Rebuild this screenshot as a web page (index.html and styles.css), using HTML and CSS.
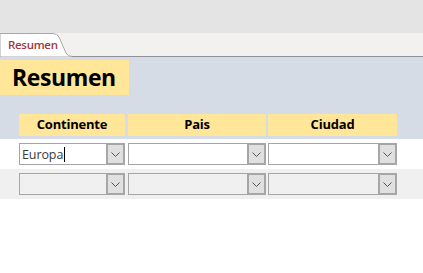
FILE: index.html
```html
<!DOCTYPE html>
<html lang="es">

<head>
    <meta charset="UTF-8">
    <meta name="viewport" content="width=device-width, initial-scale=1.0">
    <title>Resumen</title>

    <link rel="stylesheet" href="styles.css">
</head>

<body>

    <div class="ribbon"></div>

    <div class="tabs">
        <div class="tab">
            <svg class="tab-shape" width="73" height="24" viewBox="0 0 73 24">
                <path d="M0 0.5 H53 Q57 0.5 59 4 L66 20 Q68 23.5 72 23.5 V24 H0 Z" fill="#fff" stroke="#a8a8a8" />
            </svg>
            <span class="tab-label">Resumen</span>
        </div>
        <div class="tab-rest"></div>
    </div>

    <div class="form-header">
        <div class="title">Resumen</div>
        <div class="grid">
            <div class="head first">Continente</div>
            <div class="head">Pais</div>
            <div class="head">Ciudad</div>
        </div>
    </div>

    <div class="row">
        <div class="grid">
            <div class="combo first">
                <div class="combo-text">Europa<span class="caret"></span></div>
                <div class="combo-btn"><svg width="9" height="5" viewBox="0 0 9 5"><polyline points="0.5,0.5 4.5,4.5 8.5,0.5" fill="none" stroke="#555" /></svg></div>
            </div>
            <div class="combo">
                <div class="combo-text"></div>
                <div class="combo-btn"><svg width="9" height="5" viewBox="0 0 9 5"><polyline points="0.5,0.5 4.5,4.5 8.5,0.5" fill="none" stroke="#555" /></svg></div>
            </div>
            <div class="combo">
                <div class="combo-text"></div>
                <div class="combo-btn"><svg width="9" height="5" viewBox="0 0 9 5"><polyline points="0.5,0.5 4.5,4.5 8.5,0.5" fill="none" stroke="#555" /></svg></div>
            </div>
        </div>
    </div>

    <div class="row alt">
        <div class="grid">
            <div class="combo first">
                <div class="combo-text"></div>
                <div class="combo-btn"><svg width="9" height="5" viewBox="0 0 9 5"><polyline points="0.5,0.5 4.5,4.5 8.5,0.5" fill="none" stroke="#555" /></svg></div>
            </div>
            <div class="combo">
                <div class="combo-text"></div>
                <div class="combo-btn"><svg width="9" height="5" viewBox="0 0 9 5"><polyline points="0.5,0.5 4.5,4.5 8.5,0.5" fill="none" stroke="#555" /></svg></div>
            </div>
            <div class="combo">
                <div class="combo-text"></div>
                <div class="combo-btn"><svg width="9" height="5" viewBox="0 0 9 5"><polyline points="0.5,0.5 4.5,4.5 8.5,0.5" fill="none" stroke="#555" /></svg></div>
            </div>
        </div>
    </div>

</body>

</html>
```

FILE: styles.css
```css
* {
    box-sizing: border-box;
}

html,
body {
    margin: 0;
    background: #fff;
    font-family: "Open Sans", "Noto Sans", sans-serif;
}

.ribbon {
    height: 33px;
    background: #e4e4e4;
}

.tabs {
    height: 24px;
    display: flex;
    background: #f2f1ef;

    .tab {
        position: relative;
        width: 72px;
        height: 24px;
        flex-shrink: 0;

        .tab-shape {
            position: absolute;
            left: 0;
            top: 0;
        }

        .tab-label {
            position: relative;
            display: block;
            padding: 4px 0 0 8px;
            font-size: 11.5px;
            font-weight: 600;
            letter-spacing: -0.3px;
            color: #a4373a;
        }
    }

    .tab-rest {
        flex: 1;
        border-bottom: 1px solid #8e9196;
    }
}

.form-header {
    background: #d6dce5;
    padding: 3px 0 3px 0;

    .title {
        width: 129px;
        height: 35px;
        background: #ffe699;
        padding-left: 12px;
        font-size: 23px;
        line-height: 34px;
        font-weight: 700;
        letter-spacing: -0.4px;
        color: #000;
    }

    .grid {
        margin-top: 19px;
    }
}

.grid {
    display: grid;
    grid-template-columns: 107px 138px 129px;
    column-gap: 2px;
    padding-left: 19px;
}

.first {
    width: 106px;
}

.head {
    height: 22px;
    background: #ffe699;
    text-align: center;
    font-size: 13px;
    font-weight: 700;
    line-height: 21px;
    letter-spacing: -0.2px;
    color: #000;
}

.row {
    background: #fff;
    padding: 4px 0 4px 0;

    &.alt {
        background: #f0f0f0;
    }
}

.combo {
    height: 22px;
    display: flex;

    .combo-text {
        flex: 1;
        border: 1px solid #a6a6a6;
        border-right: none;
        padding-left: 2px;
        font-size: 12.5px;
        line-height: 19px;
        color: #3a3a3a;
        letter-spacing: -0.1px;
        display: flex;
        align-items: center;
    }

    .caret {
        display: inline-block;
        width: 1px;
        height: 15px;
        background: #000;
        margin-left: 1px;
    }

    .combo-btn {
        width: 19px;
        border: 2px solid #a6a6a6;
        background: #e0e0e0;
        display: flex;
        align-items: center;
        justify-content: center;
        padding-top: 1px;
    }
}
```
